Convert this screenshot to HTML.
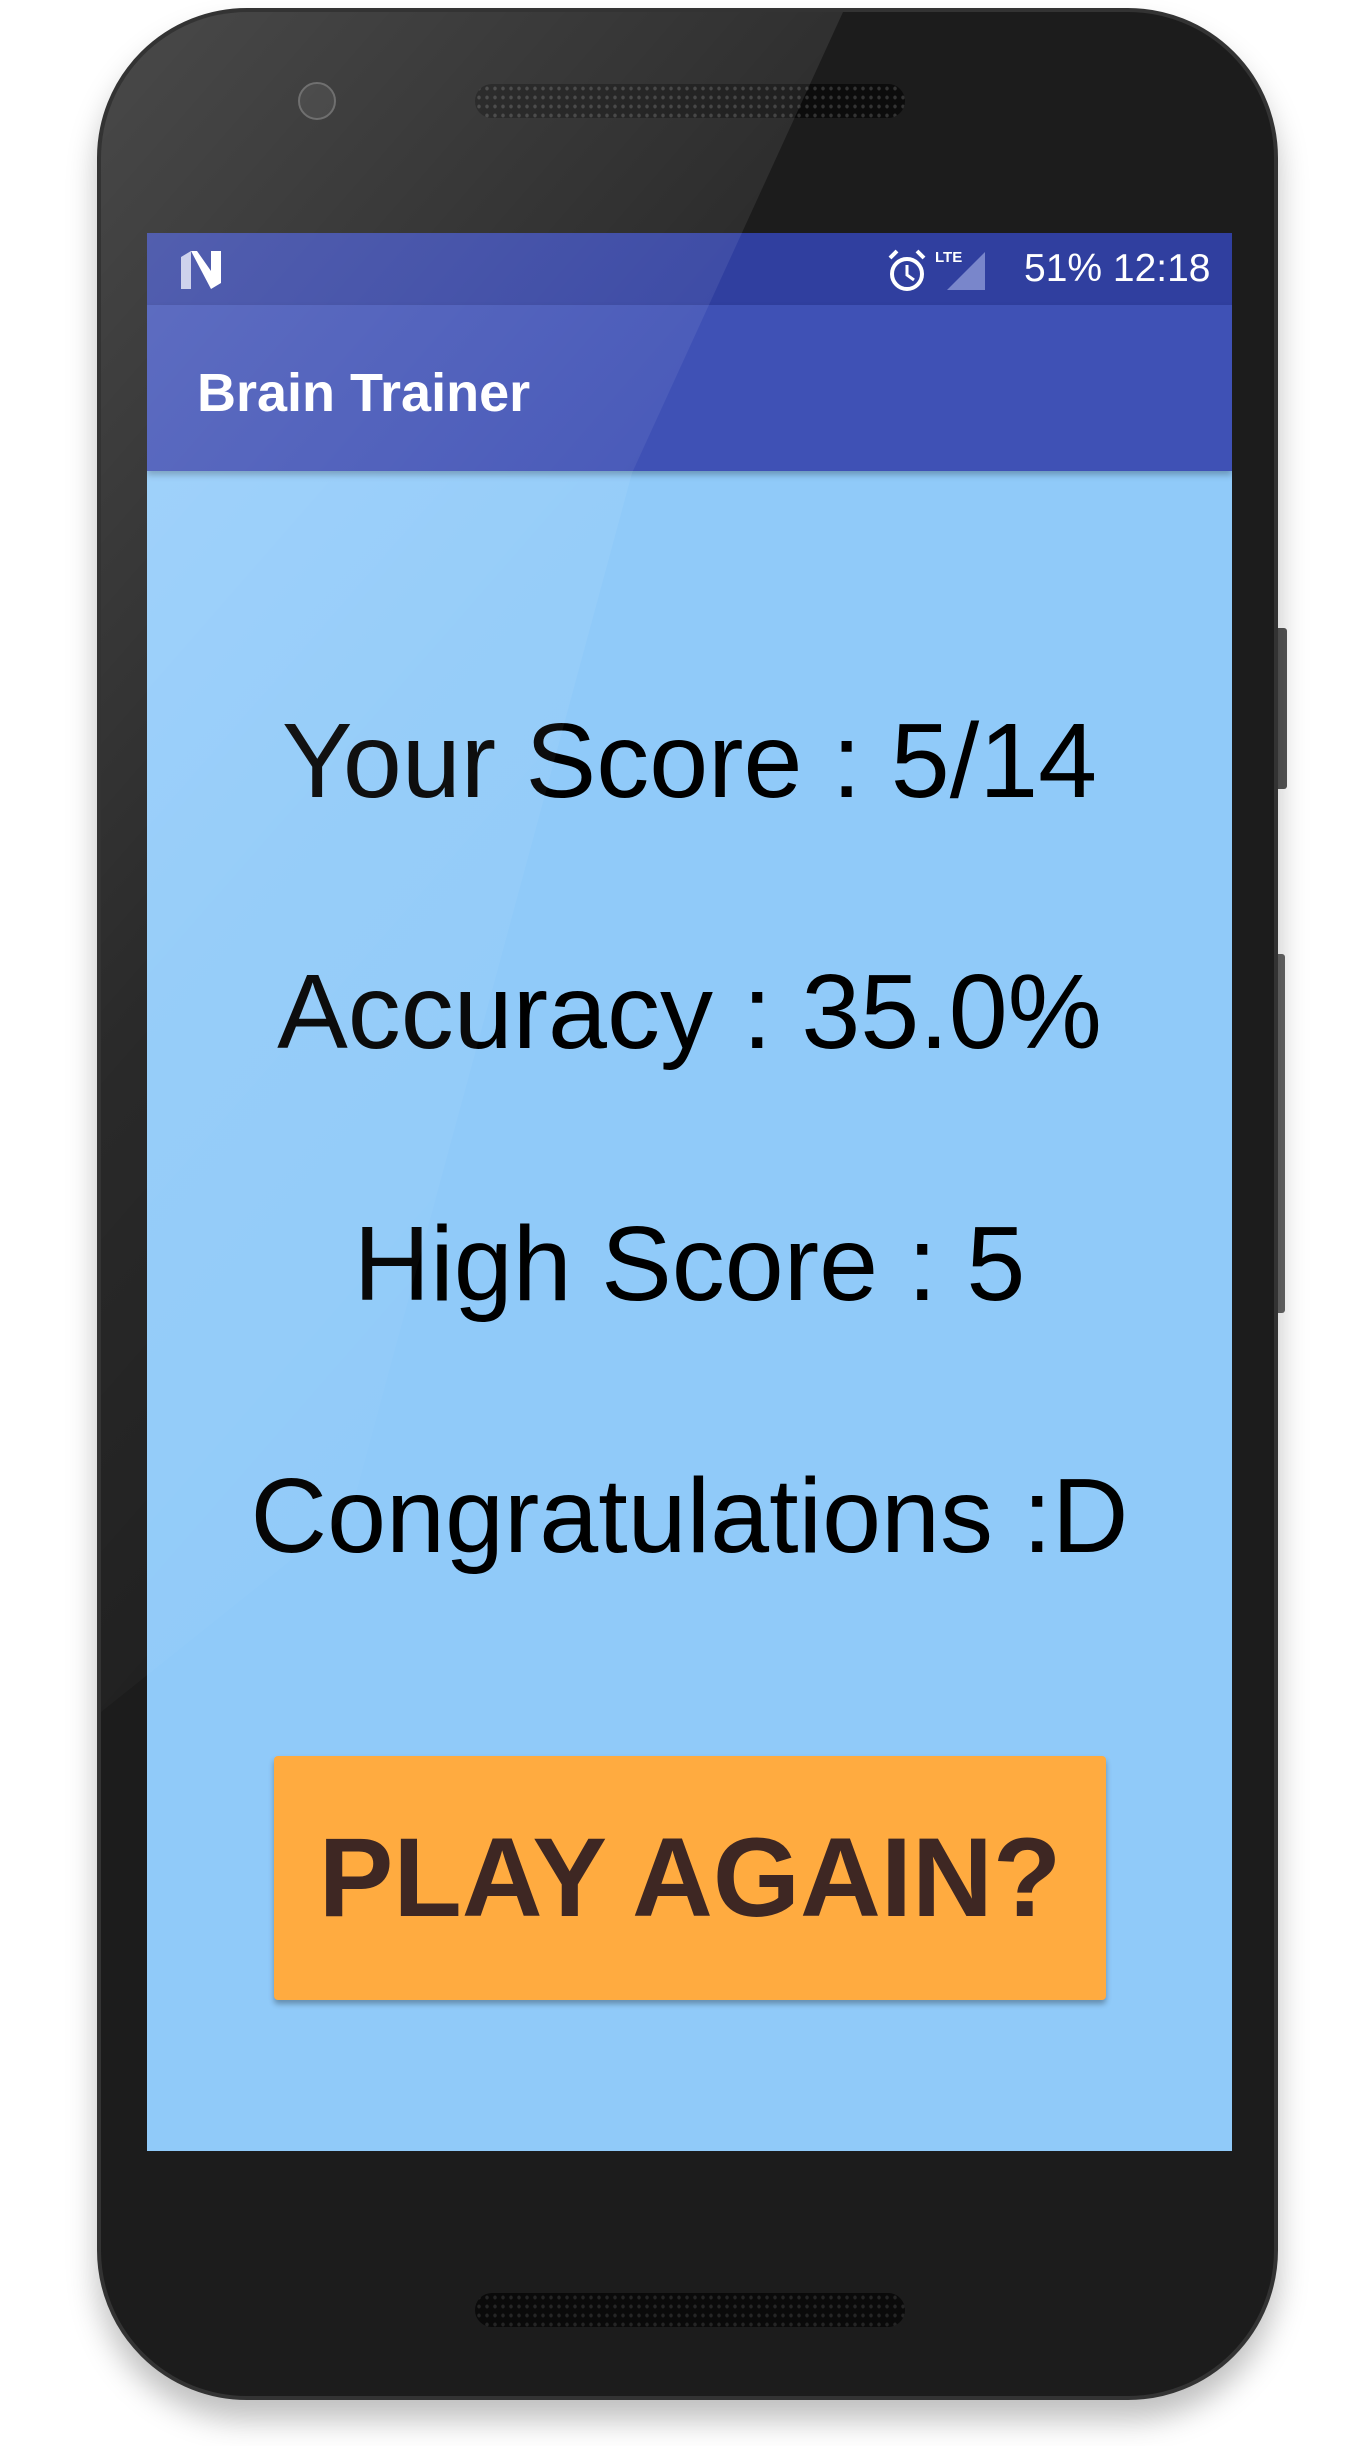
<!DOCTYPE html>
<html><head><meta charset="utf-8"><style>
html,body{margin:0;padding:0;background:#fff;width:1370px;height:2446px;overflow:hidden;position:relative;font-family:"Liberation Sans",sans-serif}
.abs{position:absolute}
.phone{left:97px;top:8px;width:1181px;height:2392px;border-radius:150px;background:#1c1c1c;box-shadow:0 20px 30px rgba(0,0,0,.25);border:4px solid #333;box-sizing:border-box}
.screen{left:147px;top:233px;width:1085px;height:1918px;background:#90caf9;overflow:hidden}
.status{left:0;top:0;width:100%;height:72px;background:#303f9f}
.toolbar{left:0;top:72px;width:100%;height:166px;background:#3f51b5;box-shadow:0 4px 6px rgba(0,0,0,.25)}
.line{left:0;width:1085px;text-align:center;font-size:106px;color:#000;line-height:1}
.btn{left:127px;top:1523px;width:832px;height:244px;background:#ffab40;border-radius:4px;box-shadow:0 4px 6px rgba(0,0,0,.3);text-align:center;font-weight:bold;font-size:112px;line-height:244px;color:#3e2723}
.glare{left:101px;top:12px;width:1173px;height:2384px;border-radius:146px;overflow:hidden;pointer-events:none}
</style></head><body>
<div class="abs" style="left:1275px;top:628px;width:12px;height:161px;background:#555;border-radius:0 3px 3px 0"></div>
<div class="abs" style="left:1275px;top:954px;width:10px;height:359px;background:#666;border-radius:0 3px 3px 0"></div>
<div class="abs phone"></div>
<div class="abs" style="left:475px;top:84px;width:430px;height:34px;border-radius:17px;background:#0c0c0c;background-image:radial-gradient(#333 1.5px,transparent 2px);background-size:8px 9px"></div>
<div class="abs" style="left:298px;top:82px;width:34px;height:34px;border-radius:50%;background:#2a2a2a;border:2px solid #555"></div>
<div class="abs" style="left:475px;top:2293px;width:430px;height:34px;border-radius:17px;background:#0a0a0a;background-image:radial-gradient(#252525 1.5px,transparent 2px);background-size:8px 9px"></div>
<div class="abs screen">
  <div class="abs status"></div>
  <div class="abs toolbar"></div>
  <svg class="abs" style="left:32px;top:18px" width="44" height="38" viewBox="0 0 44 38"><path d="M2 6 L12 0 L12 38 L2 38Z" fill="#c5cae9"/><path d="M12 0 L32 38 L42 32 L42 0 L32 0 L32 20 L18 0Z" fill="#fff"/></svg>
  <svg class="abs" style="left:740px;top:13px" width="100" height="48" viewBox="0 0 100 48">
   <circle cx="20" cy="28" r="15" fill="none" stroke="#fff" stroke-width="4"/>
   <path d="M20 19 V29 L27 34" fill="none" stroke="#fff" stroke-width="3"/>
   <path d="M3 12 L10 5 M37 12 L30 5" stroke="#fff" stroke-width="4"/>
   <text x="48" y="16" font-size="15" font-weight="bold" fill="#fff">LTE</text>
   <path d="M98 6 L98 44 L60 44Z" fill="#7986cb"/>
  </svg>
  <div class="abs" style="left:877px;top:14px;font-size:39px;color:#fff;line-height:44px">51% 12:18</div>
  <div class="abs" style="left:50px;top:120px;font-size:54px;font-weight:bold;color:#fff;line-height:80px">Brain Trainer</div>
  <div class="abs line" style="top:475px">Your Score : 5/14</div>
  <div class="abs line" style="top:726px">Accuracy : 35.0%</div>
  <div class="abs line" style="top:978px">High Score : 5</div>
  <div class="abs line" style="top:1230px">Congratulations :D</div>
  <div class="abs btn">PLAY AGAIN?</div>
</div>
<div class="abs glare"><svg width="1173" height="2384"><defs><linearGradient id="g" x1="0" y1="0" x2="0.5" y2="1"><stop offset="0" stop-color="#fff" stop-opacity=".2"/><stop offset="0.5" stop-color="#fff" stop-opacity=".06"/><stop offset="1" stop-color="#fff" stop-opacity="0"/></linearGradient></defs><polygon points="0,0 742,0 531,461 250,1500 0,1700" fill="url(#g)"/></svg></div>
</body></html>
